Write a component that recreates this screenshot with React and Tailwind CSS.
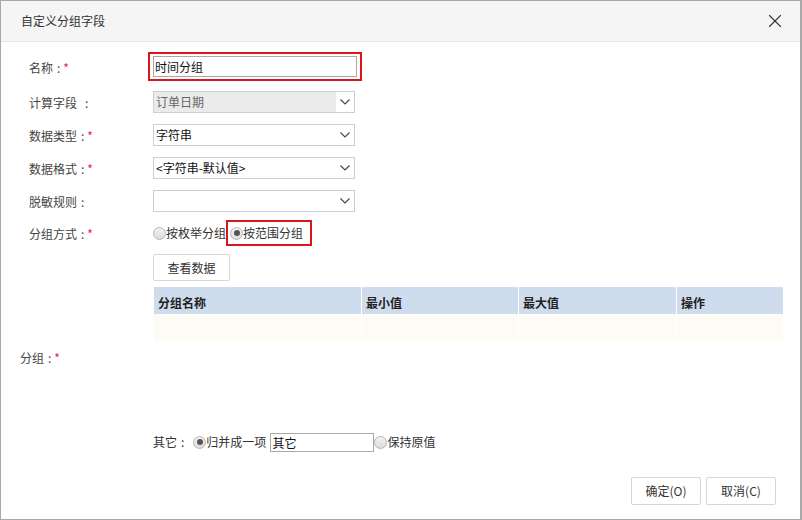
// 自定义分组字段 对话框
import { X } from 'lucide-react'

const font = { fontFamily: '"Noto Sans CJK SC", "Noto Sans", sans-serif' }

export default function App() {
  return (
    <div
      className="flex h-[520px] w-[802px] flex-col border border-r-2 border-[#a8a8a8] bg-white text-[12px] text-[#333]"
      style={font}
    >
      <div className="flex h-[41px] shrink-0 items-center justify-between border-b border-[#e6e6e6] bg-[#f5f5f5] pl-[20px] pr-[14px]">
        <span className="text-[#333]">自定义分组字段</span>
        <X size={22} strokeWidth={1.2} className="text-[#333]" />
      </div>

      <div className="flex flex-1 flex-col">
        <Row label="名称" required className="mt-[10px] h-[29px]">
          <div className="ml-[-5px] flex h-[29px] w-[214px] items-center border-2 border-[#d9161c] pl-[3px]">
            <input
              defaultValue="时间分组"
              className="h-[21px] w-[204px] border border-[#a9a9a9] bg-white px-[1px] text-[12px] text-[#111] outline-none"
              style={font}
            />
          </div>
        </Row>
        <Row label="计算字段" gap className="mt-[10px] h-[22px]">
          <Select value="订单日期" disabled />
        </Row>
        <Row label="数据类型" required className="mt-[11px] h-[22px]">
          <Select value="字符串" />
        </Row>
        <Row label="数据格式" required className="mt-[11px] h-[22px]">
          <Select value="<字符串-默认值>" />
        </Row>
        <Row label="脱敏规则" className="mt-[11px] h-[22px]">
          <Select value="" />
        </Row>
        <Row label="分组方式" required className="mt-[8px] h-[26px]">
          <div className="flex items-center">
            <Radio />
            <span className="text-[#333]">按枚举分组</span>
            <div className="flex h-[26px] items-center border-2 border-[#d9161c] pl-[2px] pr-[7px]">
              <Radio checked />
              <span className="text-[#333]">按范围分组</span>
            </div>
          </div>
        </Row>
        <div className="mt-[8px] flex h-[27px] pl-[152px]">
          <button className="h-[27px] w-[77px] rounded-[2px] border border-[#d6d6d6] bg-white text-[12px] text-[#333]">
            查看数据
          </button>
        </div>

        <div className="mt-[6px] flex h-[140px]">
          <div className="flex w-[153px] items-center pl-[19px] pt-[2px] text-[#444]">
            分组<Colon />
            <span className="text-[#e23]">*</span>
          </div>
          <div className="w-[629px]">
            <div className="grid h-[27px] grid-cols-[207px_157px_158px_107px] bg-[#cedcee] font-bold text-[#222]">
              {['分组名称', '最小值', '最大值', '操作'].map((h, i) => (
                <div key={h} className={`flex items-center pl-[4px] pt-[5px] ${i > 0 ? 'border-l border-white' : ''}`}>
                  {h}
                </div>
              ))}
            </div>
            <div className="grid h-[27px] grid-cols-[207px_157px_158px_107px] bg-[#fcfbf6]">
              {[0, 1, 2, 3].map((i) => (
                <div key={i} className={i > 0 ? 'border-l border-white' : ''} />
              ))}
            </div>
          </div>
        </div>

        <div className="mt-[5px] flex h-[20px] items-center pl-[152px]">
          <span className="text-[#333]">其它<Colon /></span>
          <span className="ml-[6px]"><Radio checked /></span>
          <span className="text-[#333]">归并成一项</span>
          <input
            defaultValue="其它"
            className="ml-[4px] h-[19px] w-[104px] border border-[#a9a9a9] px-[1px] text-[12px] text-[#111] outline-none"
            style={font}
          />
          <Radio />
          <span className="text-[#333]">保持原值</span>
        </div>

        <div className="mt-[25px] flex justify-end gap-[5px] pr-[24px]">
          <button className="h-[28px] w-[70px] rounded-[2px] border border-[#d6d6d6] bg-white text-[12px] text-[#333]">
            确定(O)
          </button>
          <button className="h-[28px] w-[70px] rounded-[2px] border border-[#d6d6d6] bg-white text-[12px] text-[#333]">
            取消(C)
          </button>
        </div>
      </div>
    </div>
  )
}

function Colon({ wide }) {
  return <span className={`${wide ? 'ml-[8px]' : 'ml-[4px]'} mr-[3px]`}>:</span>
}

function Row({ label, required, gap, className = '', children }) {
  return (
    <div className={`flex items-center ${className}`}>
      <div className="w-[152px] shrink-0 pl-[28px] pt-[2px] text-[#444]">
        {label}
        <Colon wide={gap} />
        {required && <span className="text-[#e23]">*</span>}
      </div>
      {children}
    </div>
  )
}

function Select({ value, disabled }) {
  return (
    <div className="flex h-[22px] w-[202px] items-center border border-[#cfcfcf] bg-white">
      <div className={`flex h-full flex-1 items-center pl-[2px] ${disabled ? 'bg-[#ebebeb] text-[#666]' : 'text-[#111]'}`}>
        {value}
      </div>
      <div className="flex h-full w-[18px] items-center justify-center">
        <svg width="10" height="6" viewBox="0 0 10 6">
          <path d="M0.5 0.5 L5 5 L9.5 0.5" fill="none" stroke="#444" strokeWidth="1.1" />
        </svg>
      </div>
    </div>
  )
}

function Radio({ checked }) {
  return (
    <span className="flex h-[13px] w-[13px] items-center justify-center rounded-full border border-[#b5b5b5] bg-gradient-to-b from-[#f2f2f2] to-[#dcdcdc]">
      {checked && <span className="h-[6px] w-[6px] rounded-full bg-[#555]" />}
    </span>
  )
}
